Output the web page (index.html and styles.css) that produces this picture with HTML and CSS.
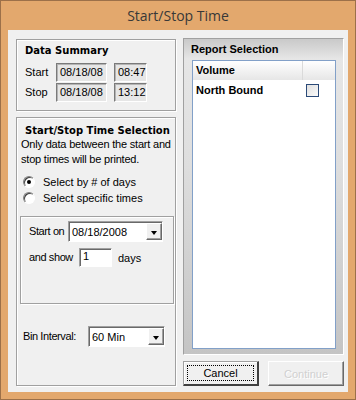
FILE: index.html
```html
<html>
<head>
<title>Start/Stop Time</title>
<link rel="stylesheet" href="styles.css">
</head>
<body>

    <div class="window">
        <div class="titlebar">Start/Stop Time</div>
        <div class="client">
            <div class="col left">
                <div class="group summary">
                    <div class="heading">Data Summary</div>
                    <div class="row">
                        <span class="lbl">Start</span>
                        <span class="field date">08/18/08</span>
                        <span class="field time">08:47</span>
                    </div>
                    <div class="row">
                        <span class="lbl">Stop</span>
                        <span class="field date">08/18/08</span>
                        <span class="field time">13:12</span>
                    </div>
                </div>
                <div class="group times">
                    <div class="heading">Start/Stop Time Selection</div>
                    <div class="desc">Only data between the start and<br>stop times will be printed.</div>
                    <div class="radios">
                        <div class="radio"><span class="dot on"></span>Select by # of days</div>
                        <div class="radio"><span class="dot"></span>Select specific times</div>
                    </div>
                    <div class="inner">
                        <div class="irow">
                            <span class="lbl startlbl">Start on</span>
                            <span class="combo datecombo"><span class="val">08/18/2008</span><span class="drop"></span></span>
                        </div>
                        <div class="irow">
                            <span class="lbl showlbl">and show</span>
                            <span class="edit">1</span>
                            <span class="days">days</span>
                        </div>
                    </div>
                    <div class="binrow">
                        <span class="lbl binlbl">Bin Interval:</span>
                        <span class="combo bincombo"><span class="val">60 Min</span><span class="drop"></span></span>
                    </div>
                </div>
            </div>
            <div class="col right">
                <div class="report">
                    <div class="rhead">Report Selection</div>
                    <div class="list">
                        <div class="lhead"><span class="c1">Volume</span><span class="c2"></span></div>
                        <div class="lrow"><span class="c1">North Bound</span><span class="c2"><span class="check"></span></span></div>
                    </div>
                </div>
                <div class="buttons">
                    <div class="btn default"><span class="focus">Cancel</span></div>
                    <div class="btn disabled">Continue</div>
                </div>
            </div>
        </div>
    </div>

</body>
</html>
```

FILE: styles.css
```css
body {
    margin: 0;
    background: #e3a86d;
}

/* outer frame */
.window {
    width: 356px;
    height: 400px;
    box-sizing: border-box;
    border: 1px solid #9c7049;
    background: #e3a86d;
    font-family: "Liberation Sans", Arial, sans-serif;
    font-size: 11px;
    color: #000;
}

.titlebar {
    height: 29px;
    line-height: 30px;
    text-align: center;
    font-family: "Open Sans", "Noto Sans", sans-serif;
    font-size: 14px;
    color: #383838;
}

.client {
    margin: 0 7px;
    height: 362px;
    box-sizing: border-box;
    background: #f0f0f0;
    display: grid;
    grid-template-columns: 160px 161px;
    column-gap: 7px;
    padding: 9px 4px 6px 8px;
    overflow: hidden;
}

.col {
    display: flex;
    flex-direction: column;
}

/* etched group boxes */
.group, .inner {
    box-sizing: border-box;
    border: 1px solid #a0a0a0;
    box-shadow: inset 1px 1px 0 #fff, 1px 1px 0 #fff;
}

.heading {
    font-family: "DejaVu Sans", sans-serif;
    font-weight: bold;
    font-size: 10px;
    line-height: 13px;
}

.lbl {
    display: inline-block;
    line-height: 19px;
}

.summary {
    height: 72px;
    padding: 4px 0 0 8px;
    margin-bottom: 6px;
}

.summary .heading {
    margin-bottom: 6px;
}

.summary .row {
    display: flex;
    height: 19px;
    margin-bottom: 1px;
}

.summary .lbl {
    width: 31px;
}

.field {
    box-sizing: border-box;
    height: 19px;
    line-height: 17px;
    padding-left: 3px;
    border: 1px solid;
    border-color: #7a7a7a #fff #fff #7a7a7a;
    box-shadow: inset 1px 1px 0 #b4b4b4;
    background: #e6e6e6;
}

.field.date {
    width: 51px;
}

.field.time {
    width: 33px;
    margin-left: 7px;
}

.times {
    height: 269px;
    padding: 6px 0 0 3px;
}

.times .heading {
    margin-left: 5px;
}

.desc {
    margin-left: 1px;
    line-height: 15px;
    letter-spacing: -0.2px;
    white-space: nowrap;
}

.radios {
    margin: 7px 0 0 3px;
}

.radio {
    display: flex;
    align-items: center;
    height: 16px;
}

.dot {
    width: 12px;
    height: 12px;
    box-sizing: border-box;
    border-radius: 50%;
    border: 1px solid;
    border-color: #808080 #fff #fff #808080;
    box-shadow: inset 1px 1px 0 #404040;
    background: #fff;
    margin-right: 8px;
    position: relative;
}

.dot.on::after {
    content: "";
    position: absolute;
    left: 3px;
    top: 3px;
    width: 4px;
    height: 4px;
    border-radius: 50%;
    background: #000;
}

.inner {
    width: 154px;
    height: 88px;
    margin-top: 10px;
    padding: 4px 0 0 8px;
}

.irow {
    display: flex;
    align-items: center;
}

.irow + .irow {
    margin-top: 6px;
}

.irow .lbl, .binlbl {
    letter-spacing: -0.4px;
}

.startlbl {
    width: 39px;
}

.showlbl {
    width: 50px;
}

.combo {
    box-sizing: border-box;
    display: flex;
    height: 21px;
    border: 1px solid;
    border-color: #a0a0a0 #fff #fff #a0a0a0;
    box-shadow: inset 1px 1px 0 #696969;
    background: #fff;
}

.combo .val {
    flex: 1;
    padding: 2px 0 0 3px;
    line-height: 16px;
}

.drop {
    width: 16px;
    margin: 1px 0 1px 0;
    box-sizing: border-box;
    border: 1px solid;
    border-color: #fff #696969 #696969 #fff;
    box-shadow: inset -1px -1px 0 #a0a0a0;
    background: #f0f0f0;
    position: relative;
}

.drop::after {
    content: "";
    position: absolute;
    left: 4px;
    top: 7px;
    border-left: 3px solid transparent;
    border-right: 3px solid transparent;
    border-top: 4px solid #000;
}

.datecombo {
    width: 95px;
}

.edit {
    box-sizing: border-box;
    width: 33px;
    height: 19px;
    line-height: 15px;
    padding-left: 3px;
    border: 1px solid;
    border-color: #a0a0a0 #fff #fff #a0a0a0;
    box-shadow: inset 1px 1px 0 #696969;
    background: #fff;
}

.days {
    margin-left: 6px;
}

.binrow {
    display: flex;
    align-items: center;
    margin: 22px 0 0 3px;
}

.binlbl {
    width: 65px;
}

.bincombo {
    width: 77px;
}

/* report selection panel */
.report {
    height: 317px;
    margin-top: -1px;
    box-sizing: border-box;
    border: 1px solid;
    border-color: #a0a0a0 #fff #fff #a0a0a0;
    background: linear-gradient(#c9c9c9 0, #e6e6e6 20px, #dedede 40%, #c4c4c4 100%);
    padding: 4px 0 0 7px;
}

.rhead, .lhead, .lrow {
    font-weight: bold;
    line-height: 13px;
}

.list {
    width: 144px;
    height: 289px;
    margin: 4px 0 0 1px;
    box-sizing: border-box;
    border: 1px solid #82a0c8;
    background: #fff;
}

.lhead, .lrow {
    display: flex;
    height: 19px;
    align-items: center;
}

.lhead {
    background: linear-gradient(#fff, #e6e6e6);
}

.lrow {
    height: 20px;
}

.c1 {
    width: 106px;
    padding-left: 3px;
}

.lhead .c2 {
    align-self: stretch;
    border-left: 1px solid #dadada;
    flex: 1;
}

.lrow .c2 {
    padding-left: 4px;
    display: flex;
}

.check {
    width: 13px;
    height: 13px;
    box-sizing: border-box;
    border: 1px solid #2b4a78;
    background: linear-gradient(135deg, #e0e0e0, #fafafa);
}

.buttons {
    display: flex;
    justify-content: space-between;
    margin-top: 6px;
}

.btn {
    width: 76px;
    height: 25px;
    box-sizing: border-box;
    display: flex;
    align-items: center;
    justify-content: center;
    background: #f0f0f0;
}

.btn.default {
    border: 1px solid;
    border-color: #a0a0a0 #404040 #404040 #a0a0a0;
    box-shadow: inset -1px -1px 0 #404040, inset 1px 1px 0 #fff;
    padding: 3px 4px 4px 3px;
}

.btn .focus {
    flex: 1;
    align-self: stretch;
    display: flex;
    align-items: center;
    justify-content: center;
    border: 1px dotted #000;
}

.btn.disabled {
    border: 1px solid;
    border-color: #fff #696969 #696969 #fff;
    box-shadow: inset -1px -1px 0 #a0a0a0;
    color: #d0d0d0;
    text-shadow: 1px 1px 0 #fff;
}
```
